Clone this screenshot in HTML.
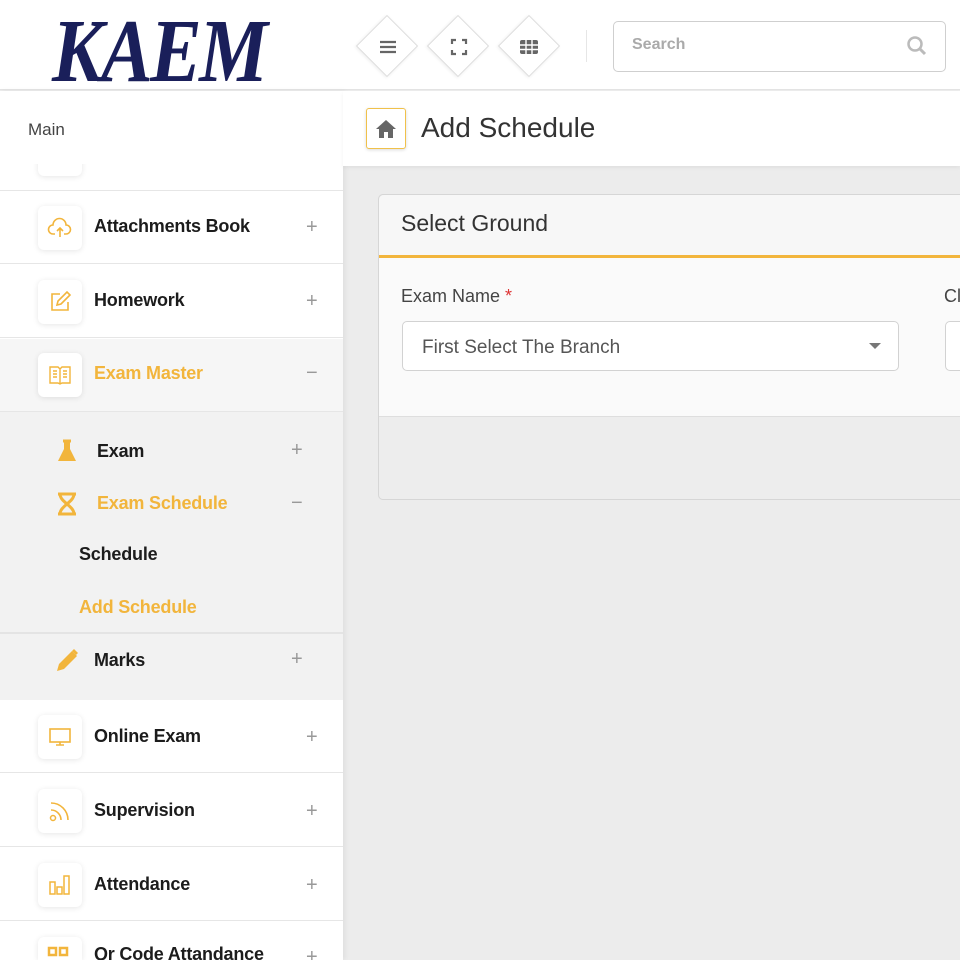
<!DOCTYPE html>
<html><head><meta charset="utf-8"><style>
*{margin:0;padding:0;box-sizing:border-box}
html,body{width:960px;height:960px;overflow:hidden}
body{background:#ececec;font-family:"Liberation Sans",sans-serif;position:relative}
.a{position:absolute}
.hdr{left:0;top:0;width:960px;height:90px;background:#fff;border-bottom:1px solid #e3e3e3}
.logo{left:52px;top:0px;font-family:"Liberation Serif",serif;font-style:italic;font-weight:bold;font-size:90px;color:#1a1f5a;letter-spacing:-3px;transform:scaleX(.86);transform-origin:left}
.dia{width:44px;height:44px;transform:rotate(45deg);border:1px solid #ddd;background:#fff;box-shadow:0 1px 3px rgba(0,0,0,.08)}
.search{left:613px;top:21px;width:333px;height:51px;border:1.5px solid #cfcfcf;border-radius:5px;background:#fff}
.side{left:0;top:91px;width:343px;height:869px;background:#fff;box-shadow:2px 0 5px rgba(0,0,0,.06)}
.item{left:0;width:343px;height:73px;border-bottom:1.5px solid #e6e6e6;background:#fff}
.ib{left:38px;width:44px;height:44px;background:#fff;border-radius:6px;box-shadow:0 1px 6px rgba(0,0,0,.1)}
.t{font-weight:bold;font-size:18px;color:#1c1c1c;letter-spacing:-.2px}
.o{color:#f2b53c}
.pl{font-size:20px;color:#999;font-weight:normal}
.sub{left:0;top:412px;width:343px;height:288px;background:#f2f2f2}
</style></head><body>
<div class="a hdr"></div>
<div class="a logo">KAEM</div>
<div class="a dia" style="left:365px;top:24px"></div>
<div class="a dia" style="left:436px;top:24px"></div>
<div class="a dia" style="left:507px;top:24px"></div>
<svg class="a" style="left:377px;top:36px" width="22" height="22" viewBox="0 0 22 22"><path d="M3 6h16M3 11h16M3 16h16" stroke="#666" stroke-width="2.2"/></svg>
<svg class="a" style="left:448px;top:36px" width="22" height="22" viewBox="0 0 22 22"><path d="M4 8V4h4M14 4h4v4M18 14v4h-4M8 18H4v-4" stroke="#666" stroke-width="2.2" fill="none"/></svg>
<svg class="a" style="left:518px;top:36px" width="22" height="22" viewBox="0 0 22 22"><rect x="2" y="4" width="18" height="14" rx="2" fill="#666"/><path d="M2 9h18M2 13.5h18M8 4v14M14 4v14" stroke="#fff" stroke-width="1.4"/></svg>
<div class="a" style="left:586px;top:30px;width:1px;height:32px;background:#e6e6e6"></div>
<div class="a search"></div>
<div class="a" style="left:632px;top:36px;font-size:16px;color:#aaa;font-weight:bold">Search</div>
<svg class="a" style="left:905px;top:34px" width="24" height="24" viewBox="0 0 24 24"><circle cx="10" cy="10" r="6.5" stroke="#bbb" stroke-width="2.5" fill="none"/><path d="M15 15l5 5" stroke="#bbb" stroke-width="3"/></svg>

<div class="a side"></div>
<div class="a ib" style="top:132px;height:44px"></div>
<div class="a" style="left:0;top:91px;width:343px;height:73px;background:#fff"></div>
<div class="a" style="left:28px;top:120px;font-size:17px;color:#444">Main</div>
<div class="a" style="left:0;top:190px;width:343px;height:1.5px;background:#e6e6e6"></div>

<div class="a item" style="top:191px"></div>
<div class="a ib" style="top:206px"></div>
<svg class="a" style="left:47px;top:215px" width="26" height="26" viewBox="0 0 26 26"><path d="M8 19H6a4.5 4.5 0 0 1 0-9 6.5 6.5 0 0 1 13 0 4.5 4.5 0 0 1 0 9h-2M13 22v-9M10 16l3-3 3 3" stroke="#f2b53c" stroke-width="1.6" fill="none"/></svg>
<div class="a t" style="left:94px;top:216px">Attachments Book</div>
<div class="a pl" style="left:306px;top:216px">+</div>

<div class="a item" style="top:265px"></div>
<div class="a ib" style="top:280px"></div>
<svg class="a" style="left:47px;top:289px" width="26" height="26" viewBox="0 0 26 26"><path d="M13 5H5v16h16v-8M10 16l1-4 9-9 3 3-9 9z" stroke="#f2b53c" stroke-width="1.6" fill="none"/></svg>
<div class="a t" style="left:94px;top:290px">Homework</div>
<div class="a pl" style="left:306px;top:290px">+</div>

<div class="a item" style="top:339px;background:#f6f6f6"></div>
<div class="a ib" style="top:353px"></div>
<svg class="a" style="left:47px;top:362px" width="26" height="26" viewBox="0 0 26 26"><path d="M3 5h8l2 2 2-2h8v16h-8l-2 1-2-1H3zM13 7v15M6 9h4M6 12h4M6 15h4M16 9h4M16 12h4M16 15h4" stroke="#f2b53c" stroke-width="1.4" fill="none"/></svg>
<div class="a t o" style="left:94px;top:363px">Exam Master</div>
<div class="a pl" style="left:306px;top:362px">−</div>

<div class="a sub"></div>
<svg class="a" style="left:55px;top:439px" width="24" height="26" viewBox="0 0 24 26"><path d="M7 2h10M9 2v8L3 22h18L15 10V2" fill="#f2b53c"/><path d="M8 2h8" stroke="#f2b53c" stroke-width="3"/></svg>
<div class="a t" style="left:97px;top:441px">Exam</div>
<div class="a pl" style="left:291px;top:439px">+</div>
<svg class="a" style="left:55px;top:491px" width="24" height="26" viewBox="0 0 24 26"><path d="M3 3h18M3 23h18M5 3c0 8 14 12 14 20M19 3C19 11 5 15 5 23" stroke="#f2b53c" stroke-width="3" fill="none"/></svg>
<div class="a t o" style="left:97px;top:493px">Exam Schedule</div>
<div class="a pl" style="left:291px;top:492px">−</div>
<div class="a t" style="left:79px;top:544px">Schedule</div>
<div class="a t o" style="left:79px;top:597px">Add Schedule</div>
<div class="a" style="left:0;top:632px;width:343px;height:1.5px;background:#e4e4e4"></div>
<svg class="a" style="left:53px;top:646px" width="28" height="28" viewBox="0 0 28 28"><path d="M4 25l2-7L19 5l5 5-13 13z" fill="#f2b53c"/><path d="M19 5l2-2 4 4-2 2" fill="#f2b53c"/></svg>
<div class="a t" style="left:94px;top:650px">Marks</div>
<div class="a pl" style="left:291px;top:648px">+</div>

<div class="a item" style="top:700px"></div>
<div class="a ib" style="top:715px"></div>
<svg class="a" style="left:47px;top:724px" width="26" height="26" viewBox="0 0 26 26"><rect x="3" y="5" width="20" height="13" stroke="#f2b53c" stroke-width="1.6" fill="none"/><path d="M13 18v3M9 21h8" stroke="#f2b53c" stroke-width="1.6"/></svg>
<div class="a t" style="left:94px;top:726px">Online Exam</div>
<div class="a pl" style="left:306px;top:726px">+</div>

<div class="a item" style="top:774px"></div>
<div class="a ib" style="top:789px"></div>
<svg class="a" style="left:47px;top:798px" width="26" height="26" viewBox="0 0 26 26"><circle cx="6" cy="20" r="2.5" stroke="#f2b53c" stroke-width="1.5" fill="none"/><path d="M4 12a10 10 0 0 1 10 10M4 5a17 17 0 0 1 17 17" stroke="#f2b53c" stroke-width="1.6" fill="none"/></svg>
<div class="a t" style="left:94px;top:800px">Supervision</div>
<div class="a pl" style="left:306px;top:800px">+</div>

<div class="a item" style="top:848px"></div>
<div class="a ib" style="top:863px"></div>
<svg class="a" style="left:47px;top:872px" width="26" height="26" viewBox="0 0 26 26"><path d="M3 10h5v12H3zM10 15h5v7h-5zM17 4h5v18h-5z" stroke="#f2b53c" stroke-width="1.5" fill="none"/></svg>
<div class="a t" style="left:94px;top:874px">Attendance</div>
<div class="a pl" style="left:306px;top:874px">+</div>

<div class="a" style="left:0;top:922px;width:343px;height:38px;background:#fff"></div>
<div class="a ib" style="top:937px;height:23px;border-radius:6px 6px 0 0"></div>
<svg class="a" style="left:47px;top:946px" width="26" height="14" viewBox="0 0 26 14"><rect x="2" y="2" width="7" height="7" stroke="#f2b53c" stroke-width="2.5" fill="none"/><rect x="13" y="2" width="7" height="7" stroke="#f2b53c" stroke-width="2.5" fill="none"/></svg>
<div class="a t" style="left:94px;top:944px">Qr Code Attandance</div>
<div class="a pl" style="left:306px;top:946px">+</div>

<div class="a" style="left:343px;top:91px;width:617px;height:75px;background:#fff;box-shadow:0 2px 4px rgba(0,0,0,.05)"></div>
<div class="a" style="left:366px;top:108px;width:40px;height:41px;border:1.5px solid #f0c14b;border-radius:3px;background:#fff;box-shadow:0 1px 3px rgba(0,0,0,.15)"></div>
<svg class="a" style="left:374px;top:117px" width="24" height="24" viewBox="0 0 24 24"><path d="M12 3L2 12h3v9h5v-6h4v6h5v-9h3z" fill="#666"/></svg>
<div class="a" style="left:421px;top:112px;font-size:28px;color:#333">Add Schedule</div>

<div class="a" style="left:378px;top:194px;width:600px;height:306px;border:1.5px solid #d6d6d6;border-radius:5px;background:#ededed"></div>
<div class="a" style="left:379px;top:195px;width:600px;height:60px;background:#f7f7f7;border-radius:5px 0 0 0"></div>
<div class="a" style="left:379px;top:255px;width:600px;height:3px;background:#f2b53c"></div>
<div class="a" style="left:379px;top:258px;width:600px;height:159px;background:#fafafa;border-bottom:1.5px solid #dedede"></div>
<div class="a" style="left:401px;top:210px;font-size:23px;color:#333">Select Ground</div>
<div class="a" style="left:401px;top:286px;font-size:18px;color:#444">Exam Name <span style="color:#d33">*</span></div>
<div class="a" style="left:944px;top:286px;font-size:18px;color:#444">Cl</div>
<div class="a" style="left:402px;top:321px;width:497px;height:50px;border:1.5px solid #d2d2d2;border-radius:5px;background:#fff"></div>
<div class="a" style="left:945px;top:321px;width:40px;height:50px;border:1.5px solid #d2d2d2;border-radius:5px;background:#fff"></div>
<div class="a" style="left:422px;top:337px;font-size:19px;color:#555">First Select The Branch</div>
<div class="a" style="left:869px;top:343px;width:0;height:0;border-left:6px solid transparent;border-right:6px solid transparent;border-top:6px solid #777"></div>
</body></html>
